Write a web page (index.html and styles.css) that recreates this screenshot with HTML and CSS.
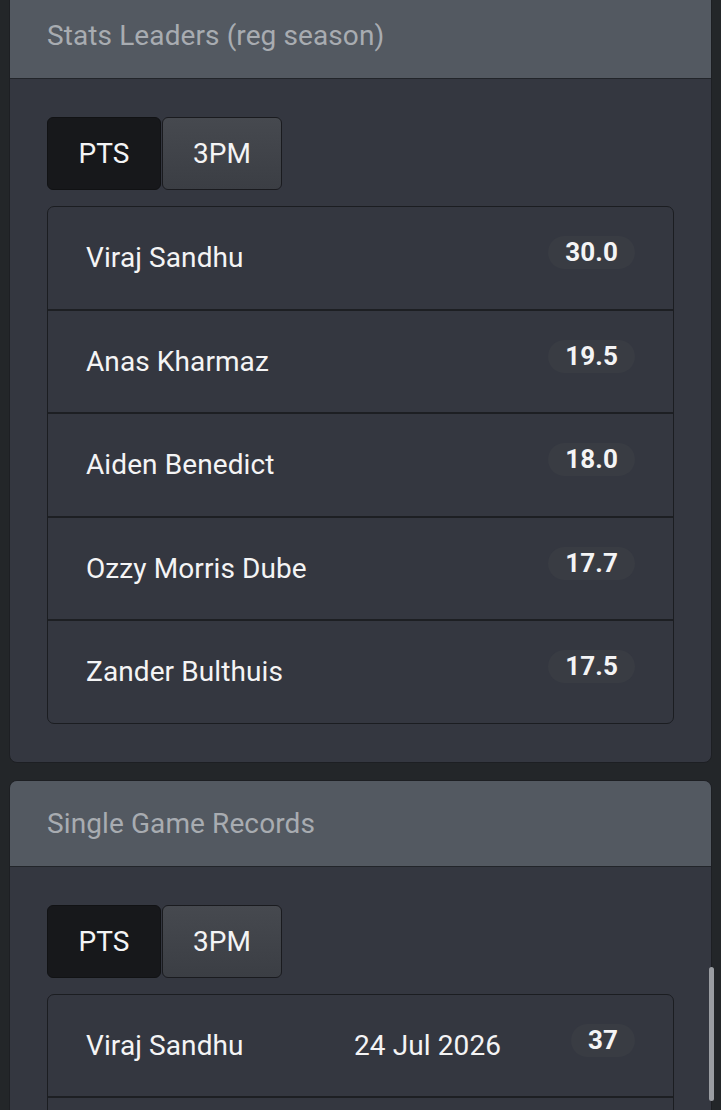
FILE: index.html
```html
<!DOCTYPE html>
<html>
<head>
    <title>Team Stats</title>
    <link rel="stylesheet" href="styles.css">
</head>
<body>
<div class="page">

    <div class="card">
        <div class="card-header">Stats Leaders (reg season)</div>
        <div class="card-body">
            <div class="tabs">
                <button class="tab active">PTS</button>
                <button class="tab">3PM</button>
            </div>
            <ul class="list">
                <li class="row"><span class="name">Viraj Sandhu</span><span class="badge">30.0</span></li>
                <li class="row"><span class="name">Anas Kharmaz</span><span class="badge">19.5</span></li>
                <li class="row"><span class="name">Aiden Benedict</span><span class="badge">18.0</span></li>
                <li class="row"><span class="name">Ozzy Morris Dube</span><span class="badge">17.7</span></li>
                <li class="row"><span class="name">Zander Bulthuis</span><span class="badge">17.5</span></li>
            </ul>
        </div>
    </div>

    <div class="card">
        <div class="card-header">Single Game Records</div>
        <div class="card-body">
            <div class="tabs">
                <button class="tab active">PTS</button>
                <button class="tab">3PM</button>
            </div>
            <ul class="list">
                <li class="row"><span class="name">Viraj Sandhu</span><span class="date">24 Jul 2026</span><span class="badge">37</span></li>
                <li class="row"></li>
            </ul>
        </div>
    </div>

</div>
<div class="scrollbar"></div>
</body>
</html>
```

FILE: styles.css
```css
html, body {
    margin: 0;
    padding: 0;
    background: #232629;
    font-family: Roboto, "Liberation Sans", sans-serif;
    height: 1110px;
    overflow: hidden;
}
.page {
    padding: 0 9px;
    margin-top: -8px;
}
.card {
    background: #343740;
    border: 1px solid #1d1f23;
    border-radius: 8px;
    overflow: hidden;
    margin-bottom: 17px;
}
.card-header {
    background: #535961;
    color: #a8acb1;
    font-size: 28px;
    letter-spacing: 0.1px;
    height: 85px;
    line-height: 85px;
    padding-left: 37px;
    border-bottom: 1px solid #22252a;
}
.card-body {
    padding: 38px 37px 38px 37px;
}
.tabs {
    display: flex;
    gap: 1px;
    margin-bottom: 16px;
}
.tab {
    font-family: inherit;
    font-size: 28px;
    color: #f4f4f5;
    height: 73px;
    border: 1px solid #1a1b1f;
    border-radius: 6px;
    background: linear-gradient(#46494f, #3b3e44);
}
.tab:first-child { width: 114px; }
.tab:last-child { width: 120px; }
.tab.active {
    background: #17181b;
    border-color: #111214;
}
.list {
    list-style: none;
    margin: 0;
    padding: 0;
    border: 1px solid #1b1d21;
    border-radius: 7px;
}
.row {
    display: flex;
    align-items: center;
    height: 101.5px;
    padding: 0 38px;
    color: #f4f4f5;
    font-size: 28px;
    letter-spacing: 0.1px;
    border-bottom: 2px solid #1d1f23;
}
.row:last-child { border-bottom: none; }
.name { flex: 1; }
.date { width: 217px; }
.badge {
    background: #393c43;
    border-radius: 17px;
    font-weight: bold;
    font-size: 26px;
    padding: 0 17px;
    height: 33px;
    line-height: 33px;
    margin-bottom: 10px;
}
.scrollbar {
    position: fixed;
    right: 7px;
    top: 967px;
    width: 5px;
    height: 134px;
    border-radius: 3px;
    background: #9a9da2;
}
```
